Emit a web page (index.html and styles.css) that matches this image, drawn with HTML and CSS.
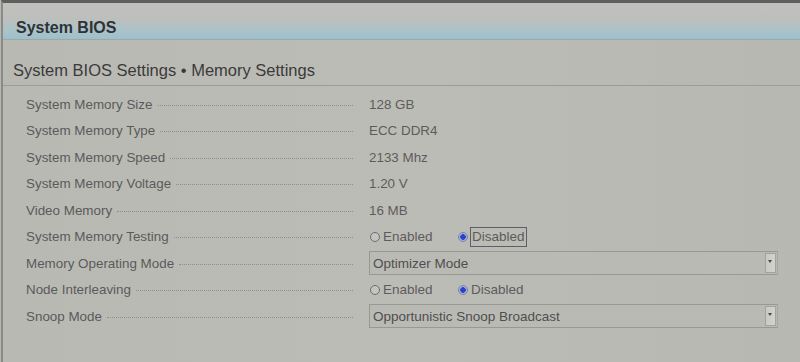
FILE: index.html
```html
<!DOCTYPE html>
<html>
<head>
  <title>System BIOS - Memory Settings</title>
<link rel="stylesheet" href="styles.css">
</head>
<body>
<div class="screen">
  <div class="topbar">System BIOS</div>
  <div class="crumb">System BIOS Settings &bull; Memory Settings</div>

  <div class="rows">
    <div class="row">
      <div class="label">System Memory Size<span class="dots"></span></div>
      <div class="value">128 GB</div>
    </div>
    <div class="row">
      <div class="label">System Memory Type<span class="dots"></span></div>
      <div class="value">ECC DDR4</div>
    </div>
    <div class="row">
      <div class="label">System Memory Speed<span class="dots"></span></div>
      <div class="value">2133 Mhz</div>
    </div>
    <div class="row">
      <div class="label">System Memory Voltage<span class="dots"></span></div>
      <div class="value">1.20 V</div>
    </div>
    <div class="row">
      <div class="label">Video Memory<span class="dots"></span></div>
      <div class="value">16 MB</div>
    </div>
    <div class="row">
      <div class="label">System Memory Testing<span class="dots"></span></div>
      <div class="value radios">
        <span class="radio"><span class="dot"></span>Enabled</span>
        <span class="radio on"><span class="dot"></span><span class="focus">Disabled</span></span>
      </div>
    </div>
    <div class="row">
      <div class="label">Memory Operating Mode<span class="dots"></span></div>
      <div class="value">
        <div class="select">Optimizer Mode<span class="arrow"></span></div>
      </div>
    </div>
    <div class="row">
      <div class="label">Node Interleaving<span class="dots"></span></div>
      <div class="value radios">
        <span class="radio"><span class="dot"></span>Enabled</span>
        <span class="radio on"><span class="dot"></span>Disabled</span>
      </div>
    </div>
    <div class="row">
      <div class="label">Snoop Mode<span class="dots"></span></div>
      <div class="value">
        <div class="select">Opportunistic Snoop Broadcast<span class="arrow"></span></div>
      </div>
    </div>
  </div>
</div>
</body>
</html>
```

FILE: styles.css
```css
* {
  box-sizing: border-box;
  margin: 0;
  padding: 0;
}

body {
  font-family: 'Liberation Sans', Arial, sans-serif;
  background-color: #b7b7b2;
  color: #555;
  width: 800px;
  height: 362px;
  overflow: hidden;
}

.screen {
  height: 362px;
  border-top: 3px solid #5e5e5c;
  border-left: 2px solid #8a8a87;
  margin-left: 1px;
  background: linear-gradient(90deg, #b9b9b4 0%, #bcbcb7 50%, #b8b8b3 100%);
}

.topbar {
  height: 37px;
  padding: 16px 0 0 13px;
  font-size: 16px;
  font-weight: bold;
  color: #2f3336;
  background: linear-gradient(180deg, #c0c1bd 0%, #bdbfbd 45%, #a9c3ca 78%, #9ebfca 100%);
  border-bottom: 1px solid #9aa9ad;
}

.crumb {
  height: 46px;
  padding: 21px 0 0 10px;
  font-size: 16.5px;
  color: #3a3a3a;
  border-bottom: 1px solid #9c9c98;
}

.rows {
  padding: 5px 22px 0 23px;
}

.row {
  display: flex;
  align-items: center;
  height: 26.5px;
  font-size: 13.4px;
}

.label {
  display: flex;
  align-items: center;
  width: 327px;
  color: #5a5a5a;
  white-space: nowrap;
}

.dots {
  flex: 1;
  margin: 2px 0 0 5px;
  border-bottom: 1px dotted #8e8e8a;
}

.value {
  flex: 1;
  margin-left: 16px;
  color: #5c5c5c;
}

.radios {
  display: flex;
  align-items: center;
  padding-left: 1px;
}

.radio {
  display: flex;
  align-items: center;
  width: 88px;
  font-size: 13.5px;
}

.radio .dot {
  width: 10px;
  height: 10px;
  border: 1px solid #6d6d6b;
  border-radius: 50%;
  margin-right: 3px;
  background: #c4c4c0;
}

.radio.on .dot {
  border-color: #7b82a8;
  background: radial-gradient(circle, #2b43c9 0 2.5px, #9ba6d8 3px, #c8cad4 5px);
}

.focus {
  border: 1px solid #5d5f68;
  padding: 1px 1px 2px 1px;
  margin-left: -1px;
}

.select {
  position: relative;
  height: 24px;
  padding: 4px 0 0 3px;
  border: 1px solid #989894;
  border-right-color: #a6a6a2;
  background: #babab5;
  font-size: 13.5px;
  color: #4e4e4e;
}

.arrow {
  position: absolute;
  top: 1px;
  right: 1px;
  width: 11px;
  height: 20px;
  background: linear-gradient(90deg, #c9c9c6, #d2d2cf);
  border: 1px solid #a2a29f;
}

.arrow::after {
  content: "";
  position: absolute;
  top: 6px;
  left: 2px;
  border-left: 2.5px solid transparent;
  border-right: 2.5px solid transparent;
  border-top: 3px solid #4a4a4a;
}
```
